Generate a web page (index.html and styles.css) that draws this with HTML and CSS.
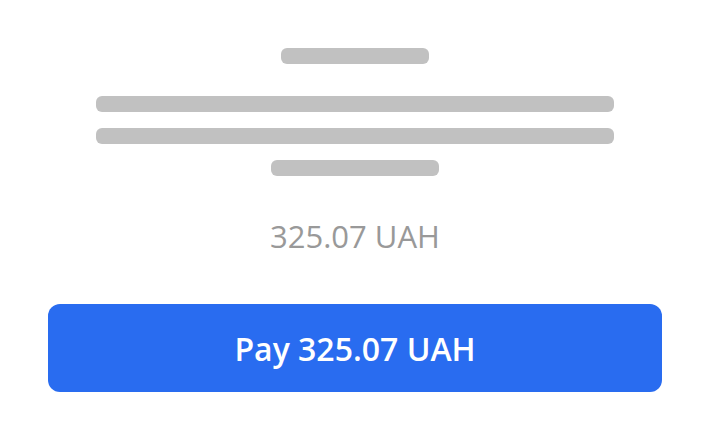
FILE: index.html
```html
<!DOCTYPE html>
<html lang="en">
<head>
    <meta charset="UTF-8">
    <title>Payment</title>
    <link rel="stylesheet" href="styles.css">
</head>
<body>
    <div class="pay">
        <!-- placeholder lines while the order details load -->
        <div class="sk">
            <div class="line title"></div>
            <div class="line full"></div>
            <div class="line full"></div>
            <div class="line short"></div>
        </div>
        <div class="amount">325.07 UAH</div>
        <button class="btnPay">Pay 325.07 UAH</button>
    </div>
</body>
</html>
```
FILE: styles.css
```css
body {
    margin: 0;
    background: #fff;
    font-family: "Open Sans", "Noto Sans", sans-serif;
}
.pay {
    padding: 48px 48px 0;
    display: flex;
    flex-direction: column;
    align-items: center;
}
.sk {
    display: flex;
    flex-direction: column;
    align-items: center;
    gap: 16px;
}
.line {
    height: 16px;
    border-radius: 6px;
    background: #c1c1c1;
}
.title {
    width: 148px;
    margin-bottom: 16px;
}
.full {
    width: 518px;
}
.short {
    width: 168px;
}
.amount {
    margin-top: 38px;
    font-size: 31px;
    line-height: 44px;
    color: #999;
}
.btnPay {
    margin-top: 46px;
    width: 100%;
    height: 88px;
    border: 0;
    border-radius: 12px;
    background: #296cf0;
    color: #fff;
    font-family: inherit;
    font-size: 32px;
    font-weight: 600;
}
```
